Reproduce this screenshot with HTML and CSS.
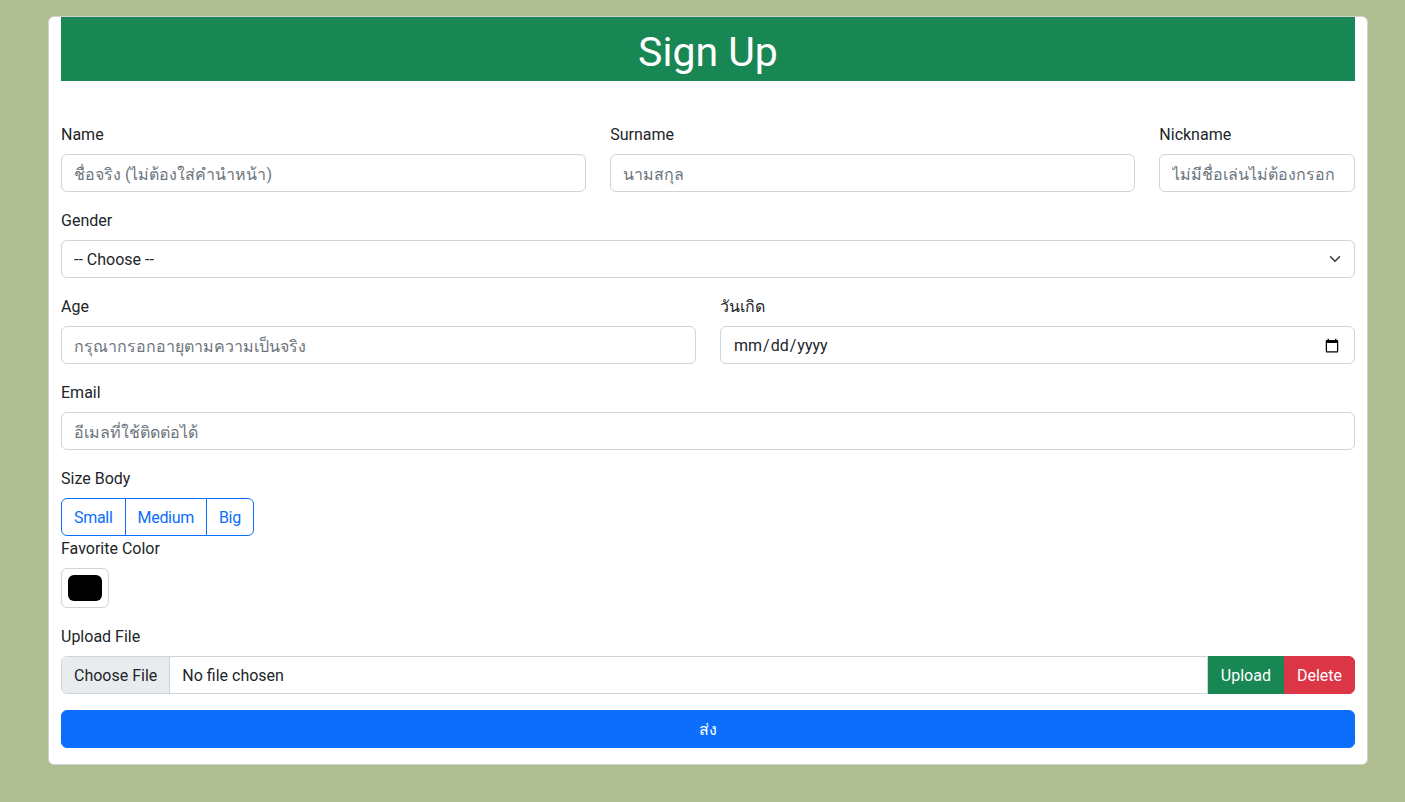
FILE: index.html
```html
<!DOCTYPE html>
<html lang="th">
<head>
<meta charset="utf-8">
<title>Sign Up</title>
<link rel="stylesheet" href="styles.css">
</head>
<body>
<div class="card">
  <div class="card-header">
    <h1 class="title">Sign Up</h1>
  </div>
  <form class="form">
    <div class="row row-3">
      <div class="col field">
        <label class="label" for="name">Name</label>
        <input class="control" id="name" type="text" placeholder="ชื่อจริง (ไม่ต้องใส่คำนำหน้า)">
      </div>
      <div class="col field">
        <label class="label" for="surname">Surname</label>
        <input class="control" id="surname" type="text" placeholder="นามสกุล">
      </div>
      <div class="col field">
        <label class="label" for="nick">Nickname</label>
        <input class="control" id="nick" type="text" placeholder="ไม่มีชื่อเล่นไม่ต้องกรอก">
      </div>
    </div>
    <div class="field">
      <label class="label" for="gender">Gender</label>
      <div class="select-wrap">
        <select class="control select" id="gender">
          <option>-- Choose --</option>
          <option>Male</option>
          <option>Female</option>
        </select>
        <svg class="chevron" width="12" height="12" viewBox="0 0 16 16"><path d="M2 5l6 6 6-6" fill="none" stroke="#343a40" stroke-width="2" stroke-linecap="round" stroke-linejoin="round"/></svg>
      </div>
    </div>
    <div class="row row-2">
      <div class="col field">
        <label class="label" for="age">Age</label>
        <input class="control" id="age" type="text" placeholder="กรุณากรอกอายุตามความเป็นจริง">
      </div>
      <div class="col field">
        <label class="label" for="bday">วันเกิด</label>
        <input class="control" id="bday" type="date">
      </div>
    </div>
    <div class="field">
      <label class="label" for="email">Email</label>
      <input class="control" id="email" type="email" placeholder="อีเมลที่ใช้ติดต่อได้">
    </div>
    <div class="size">
      <label class="label">Size Body</label>
      <div class="btn-group">
        <button type="button" class="btn-outline">Small</button>
        <button type="button" class="btn-outline">Medium</button>
        <button type="button" class="btn-outline">Big</button>
      </div>
    </div>
    <div class="field">
      <label class="label" for="color">Favorite Color</label>
      <input class="color" id="color" type="color" value="#000000">
    </div>
    <div class="field">
      <label class="label" for="file">Upload File</label>
      <div class="input-group">
        <input class="control file" id="file" type="file">
        <button type="button" class="btn btn-upload">Upload</button>
        <button type="button" class="btn btn-delete">Delete</button>
      </div>
    </div>
    <button type="submit" class="btn btn-submit">ส่ง</button>
  </form>
</div>
</body>
</html>
```
FILE: styles.css
```css
* { box-sizing: border-box; }
html, body { margin: 0; }
body {
  background: #afbd91;
  font-family: Roboto, "Noto Sans", "Noto Sans CJK SC", sans-serif;
  font-size: 16px;
  line-height: 1.5;
  color: #212529;
}
.card {
  width: 1320px;
  margin: 16px 0 0 48px;
  background: #fff;
  border: 1px solid rgba(0,0,0,.175);
  border-radius: 6px;
  padding: 0 12px 16px;
}
.card-header {
  background: #198754;
  color: #fff;
  text-align: center;
  padding: 11px 0 5px;
}
.title {
  margin: 0;
  font-size: 41px;
  line-height: 48px;
  font-weight: 400;
}
.form { padding-top: 41px; }
.row {
  display: grid;
  margin: 0 -12px;
}
.row-3 { grid-template-columns: 5fr 5fr 2fr; }
.row-2 { grid-template-columns: 1fr 1fr; }
.col { padding: 0 12px; min-width: 0; }
.field { margin-bottom: 16px; }
.label {
  display: block;
  padding-top: 1px;
  margin-bottom: 7px;
  line-height: 24px;
}
.control {
  display: block;
  width: 100%;
  height: 38px;
  padding: 7px 12px 5px;
  font: inherit;
  line-height: 24px;
  color: #212529;
  background: #fff;
  border: 1px solid #ced4da;
  border-radius: 6px;
}
.control::placeholder { color: #6c757d; }
.select-wrap { position: relative; }
.select { appearance: none; -webkit-appearance: none; padding-right: 36px; }
.chevron {
  position: absolute;
  right: 14px;
  top: 13px;
  pointer-events: none;
}
.btn-group { display: inline-flex; }
.btn-outline {
  font: inherit;
  line-height: 24px;
  padding: 7px 12px 5px;
  color: #0d6efd;
  background: #fff;
  border: 1px solid #0d6efd;
  border-radius: 0;
  margin-left: -1px;
  letter-spacing: -0.3px;
}
.btn-outline:first-child { margin-left: 0; border-radius: 6px 0 0 6px; }
.btn-outline:last-child { border-radius: 0 6px 6px 0; }
.color {
  display: block;
  width: 48px;
  height: 40px;
  padding: 6px;
  background: #fff;
  border: 1px solid #ced4da;
  border-radius: 6px;
  cursor: pointer;
}
.color::-webkit-color-swatch-wrapper { padding: 0; }
.color::-webkit-color-swatch { border: none; border-radius: 6px; }
.input-group { display: flex; }
.file {
  flex: 1;
  min-width: 0;
  padding: 0;
  overflow: hidden;
  border-radius: 6px 0 0 6px;
}
.file::file-selector-button {
  font: inherit;
  height: 36px;
  padding: 7px 12px 5px;
  margin: 0 12px 0 0;
  color: #212529;
  background: #e9ecef;
  border: 0;
  border-right: 1px solid #ced4da;
  border-radius: 0;
}
.btn {
  font: inherit;
  line-height: 24px;
  padding: 7px 12px 5px;
  color: #fff;
  border: 1px solid transparent;
  border-radius: 0;
}
.btn-upload { background: #198754; border-color: #198754; }
.btn-delete { background: #dc3545; border-color: #dc3545; border-radius: 0 6px 6px 0; }
.btn-submit {
  display: block;
  width: 100%;
  background: #0d6efd;
  border-color: #0d6efd;
  border-radius: 6px;
}
```
